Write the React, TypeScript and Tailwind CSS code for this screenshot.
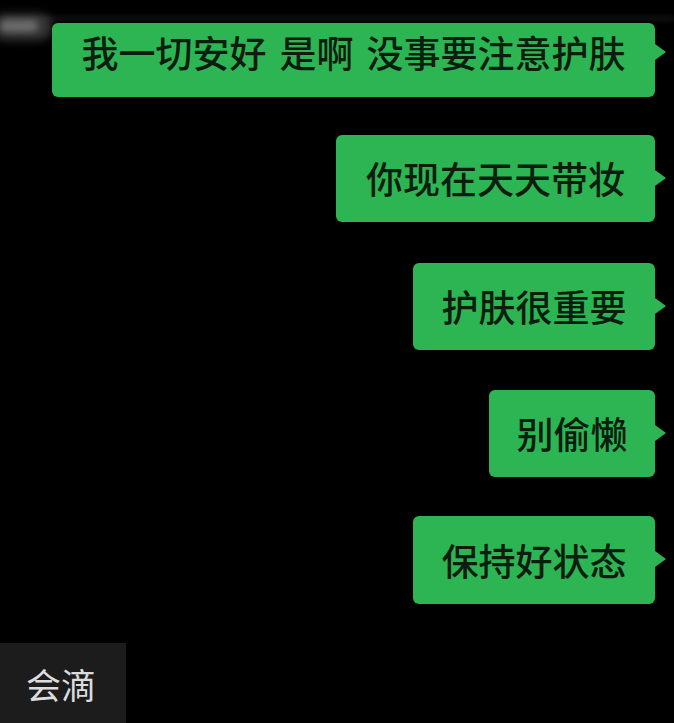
import React from "react";

const FONT = { fontFamily: '"Noto Sans CJK SC", "Noto Sans", sans-serif' };

function Tail({ top }: { top: number }) {
  return (
    <div
      className="absolute right-[-11px] w-0 h-0 border-y-[8px] border-y-transparent border-l-[11px] border-l-[#2db553]"
      style={{ top }}
    />
  );
}

function Bubble({
  text,
  width,
  className = "",
}: {
  text: string;
  width: string;
  className?: string;
}) {
  return (
    <div
      className={`relative h-[87px] rounded-[6px] bg-[#2db553] flex items-center justify-center text-[37px] leading-[37px] font-medium text-[#0a1d0f] ${width} ${className}`}
    >
      <span>{text}</span>
      <Tail top={35} />
    </div>
  );
}

export default function App() {
  return (
    <div
      className="relative w-[674px] h-[723px] bg-black overflow-hidden flex flex-col items-end pr-[19px] pt-[23px]"
      style={FONT}
    >
      {/* top smudge */}
      <div className="absolute left-0 top-[16px] w-full h-[5px] bg-[#101010] blur-[2px]" />
      <div className="absolute left-[-8px] top-[14px] w-[60px] h-[26px] rounded-full bg-[#6e6e6e] opacity-50 blur-[5px]" />
      <div className="absolute left-[0px] top-[20px] w-[38px] h-[12px] rounded-full bg-[#a8a8a8] opacity-45 blur-[3px]" />

      <div className="relative w-[603px] h-[74px] rounded-[6px] bg-[#2db553] flex items-start justify-center pt-[11px] gap-[13px] text-[37px] leading-[37px] font-medium text-[#0a1d0f]">
        <span>我一切安好</span>
        <span>是啊</span>
        <span>没事要注意护肤</span>
        <Tail top={21} />
      </div>

      <Bubble text="你现在天天带妆" width="w-[319px]" className="mt-[38px]" />
      <Bubble text="护肤很重要" width="w-[242px]" className="mt-[41px]" />
      <Bubble text="别偷懒" width="w-[166px]" className="mt-[40px]" />
      <Bubble text="保持好状态" width="w-[242px]" className="mt-[39px] h-[88px]" />

      <div className="self-start mt-[39px] w-[126px] h-[80px] bg-[#1c1c1c] flex items-center pl-[26px] text-[35px] leading-[35px] text-[#dcdcdc]">
        会滴
      </div>
    </div>
  );
}
